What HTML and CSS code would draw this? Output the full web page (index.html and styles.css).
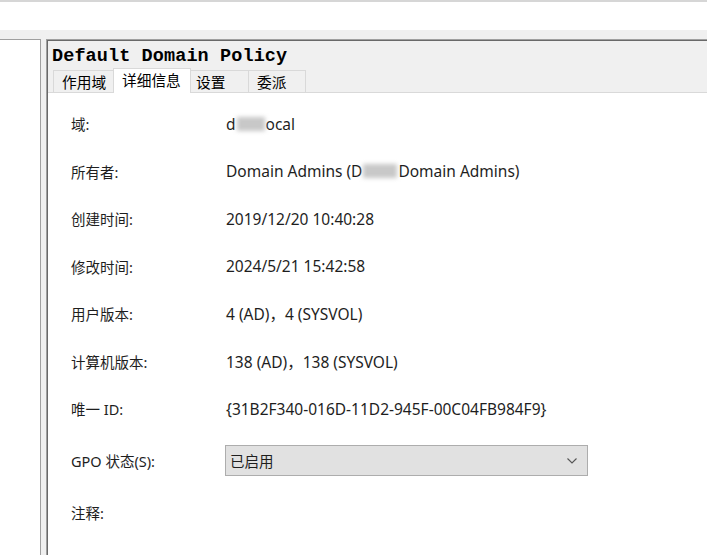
FILE: index.html
```html
<!DOCTYPE html>
<html>
<head>
    <title>Default Domain Policy</title>
    <link rel="stylesheet" href="styles.css">
</head>
<body>
    <div class="topbar"></div>

    <div class="workspace">
        <div class="tree"></div>
        <div class="splitter"></div>

        <div class="pane">
            <div class="pane-header">
                <div class="gpo-title">Default Domain Policy</div>
                <div class="tabs">
                    <div class="tab">作用域</div>
                    <div class="tab active">详细信息</div>
                    <div class="tab">设置</div>
                    <div class="tab">委派</div>
                </div>
            </div>

            <div class="details">
                <div class="row">
                    <div class="label">域:</div>
                    <div class="value">d<span class="smudge short"></span>ocal</div>
                </div>
                <div class="row">
                    <div class="label">所有者:</div>
                    <div class="value">Domain Admins (D<span class="smudge"></span>Domain Admins)</div>
                </div>
                <div class="row">
                    <div class="label">创建时间:</div>
                    <div class="value">2019/12/20 10:40:28</div>
                </div>
                <div class="row">
                    <div class="label">修改时间:</div>
                    <div class="value">2024/5/21 15:42:58</div>
                </div>
                <div class="row">
                    <div class="label">用户版本:</div>
                    <div class="value">4 (AD)，4 (SYSVOL)</div>
                </div>
                <div class="row">
                    <div class="label">计算机版本:</div>
                    <div class="value">138 (AD)，138 (SYSVOL)</div>
                </div>
                <div class="row">
                    <div class="label">唯一 ID:</div>
                    <div class="value">{31B2F340-016D-11D2-945F-00C04FB984F9}</div>
                </div>
                <div class="row row-select">
                    <div class="label">GPO 状态(S):</div>
                    <div class="select">
                        <span>已启用</span>
                        <svg width="10" height="6" viewBox="0 0 10 6"><path d="M0.5 0.5 L5 5 L9.5 0.5" fill="none" stroke="#555" stroke-width="1.1"/></svg>
                    </div>
                </div>
                <div class="row">
                    <div class="label">注释:</div>
                </div>
            </div>
        </div>
    </div>
</body>
</html>
```

FILE: styles.css
```css
body {
    margin: 0;
    height: 555px;
    overflow: hidden;
    background: #ffffff;
    font-family: "Noto Sans", "Noto Sans CJK SC", sans-serif;
    color: #1e1e1e;
    display: flex;
    flex-direction: column;
}

.topbar {
    height: 28px;
    border-top: 2px solid #d6d6d6;
    background: #ffffff;
}

.workspace {
    flex: 1;
    display: flex;
    background: #f0f0f0;
    padding-top: 9px;
}

.tree {
    width: 40px;
    background: #ffffff;
    border-top: 1px solid #a0a0a0;
    border-right: 1px solid #a0a0a0;
}

.splitter {
    width: 5px;
}

.pane {
    flex: 1;
    display: flex;
    flex-direction: column;
    border-top: 1px solid #a0a0a0;
    border-left: 1px solid #a0a0a0;
    box-shadow: inset 1px 1px 0 #696969;
}

.pane-header {
    background: #f0f0f0;
    padding: 5px 0 0 4px;
    border-bottom: 1px solid #d9d9d9;
    margin-left: 1px;
    margin-top: 1px;
}

.gpo-title {
    font-family: "Liberation Mono", monospace;
    font-weight: bold;
    font-size: 18.5px;
    line-height: 22px;
    color: #000000;
    letter-spacing: 0.1px;
}

.tabs {
    display: flex;
    align-items: flex-end;
    padding-left: 1px;
}

.tab {
    box-sizing: border-box;
    height: 22px;
    padding: 0 0 0 8px;
    font-size: 14.7px;
    line-height: 22px;
    white-space: nowrap;
    background: #f0f0f0;
    border: 1px solid #d9d9d9;
    border-bottom: none;
    margin-right: -1px;
    color: #000000;
}

.tab:nth-child(1) { width: 61px; }
.tab:nth-child(2) { width: 78px; }
.tab:nth-child(3) { width: 59px; padding-left: 5px; }
.tab:nth-child(4) { width: 58px; }

.tab.active {
    height: 25px;
    background: #ffffff;
    position: relative;
    margin-bottom: -1px;
    z-index: 1;
    line-height: 23px;
}

.details {
    flex: 1;
    background: #ffffff;
    margin-left: 1px;
    padding: 7px 0 0 23px;
}

.row {
    display: flex;
    align-items: center;
    height: 47.5px;
    font-size: 14.5px;
}

.label {
    width: 155px;
}

.value {
    display: flex;
    align-items: center;
    font-size: 15.5px;
}

.smudge {
    display: inline-block;
    width: 34px;
    height: 14px;
    margin: 0 1px;
    background: #c8c8c8;
    filter: blur(2px);
}

.smudge.short {
    width: 28px;
}

.row-select {
    height: 56.5px;
}

.select {
    width: 347px;
    height: 29px;
    margin-left: -1px;
    padding: 0 10px 0 4px;
    background: #e1e1e1;
    border: 1px solid #adadad;
    display: flex;
    align-items: center;
    justify-content: space-between;
}
```
